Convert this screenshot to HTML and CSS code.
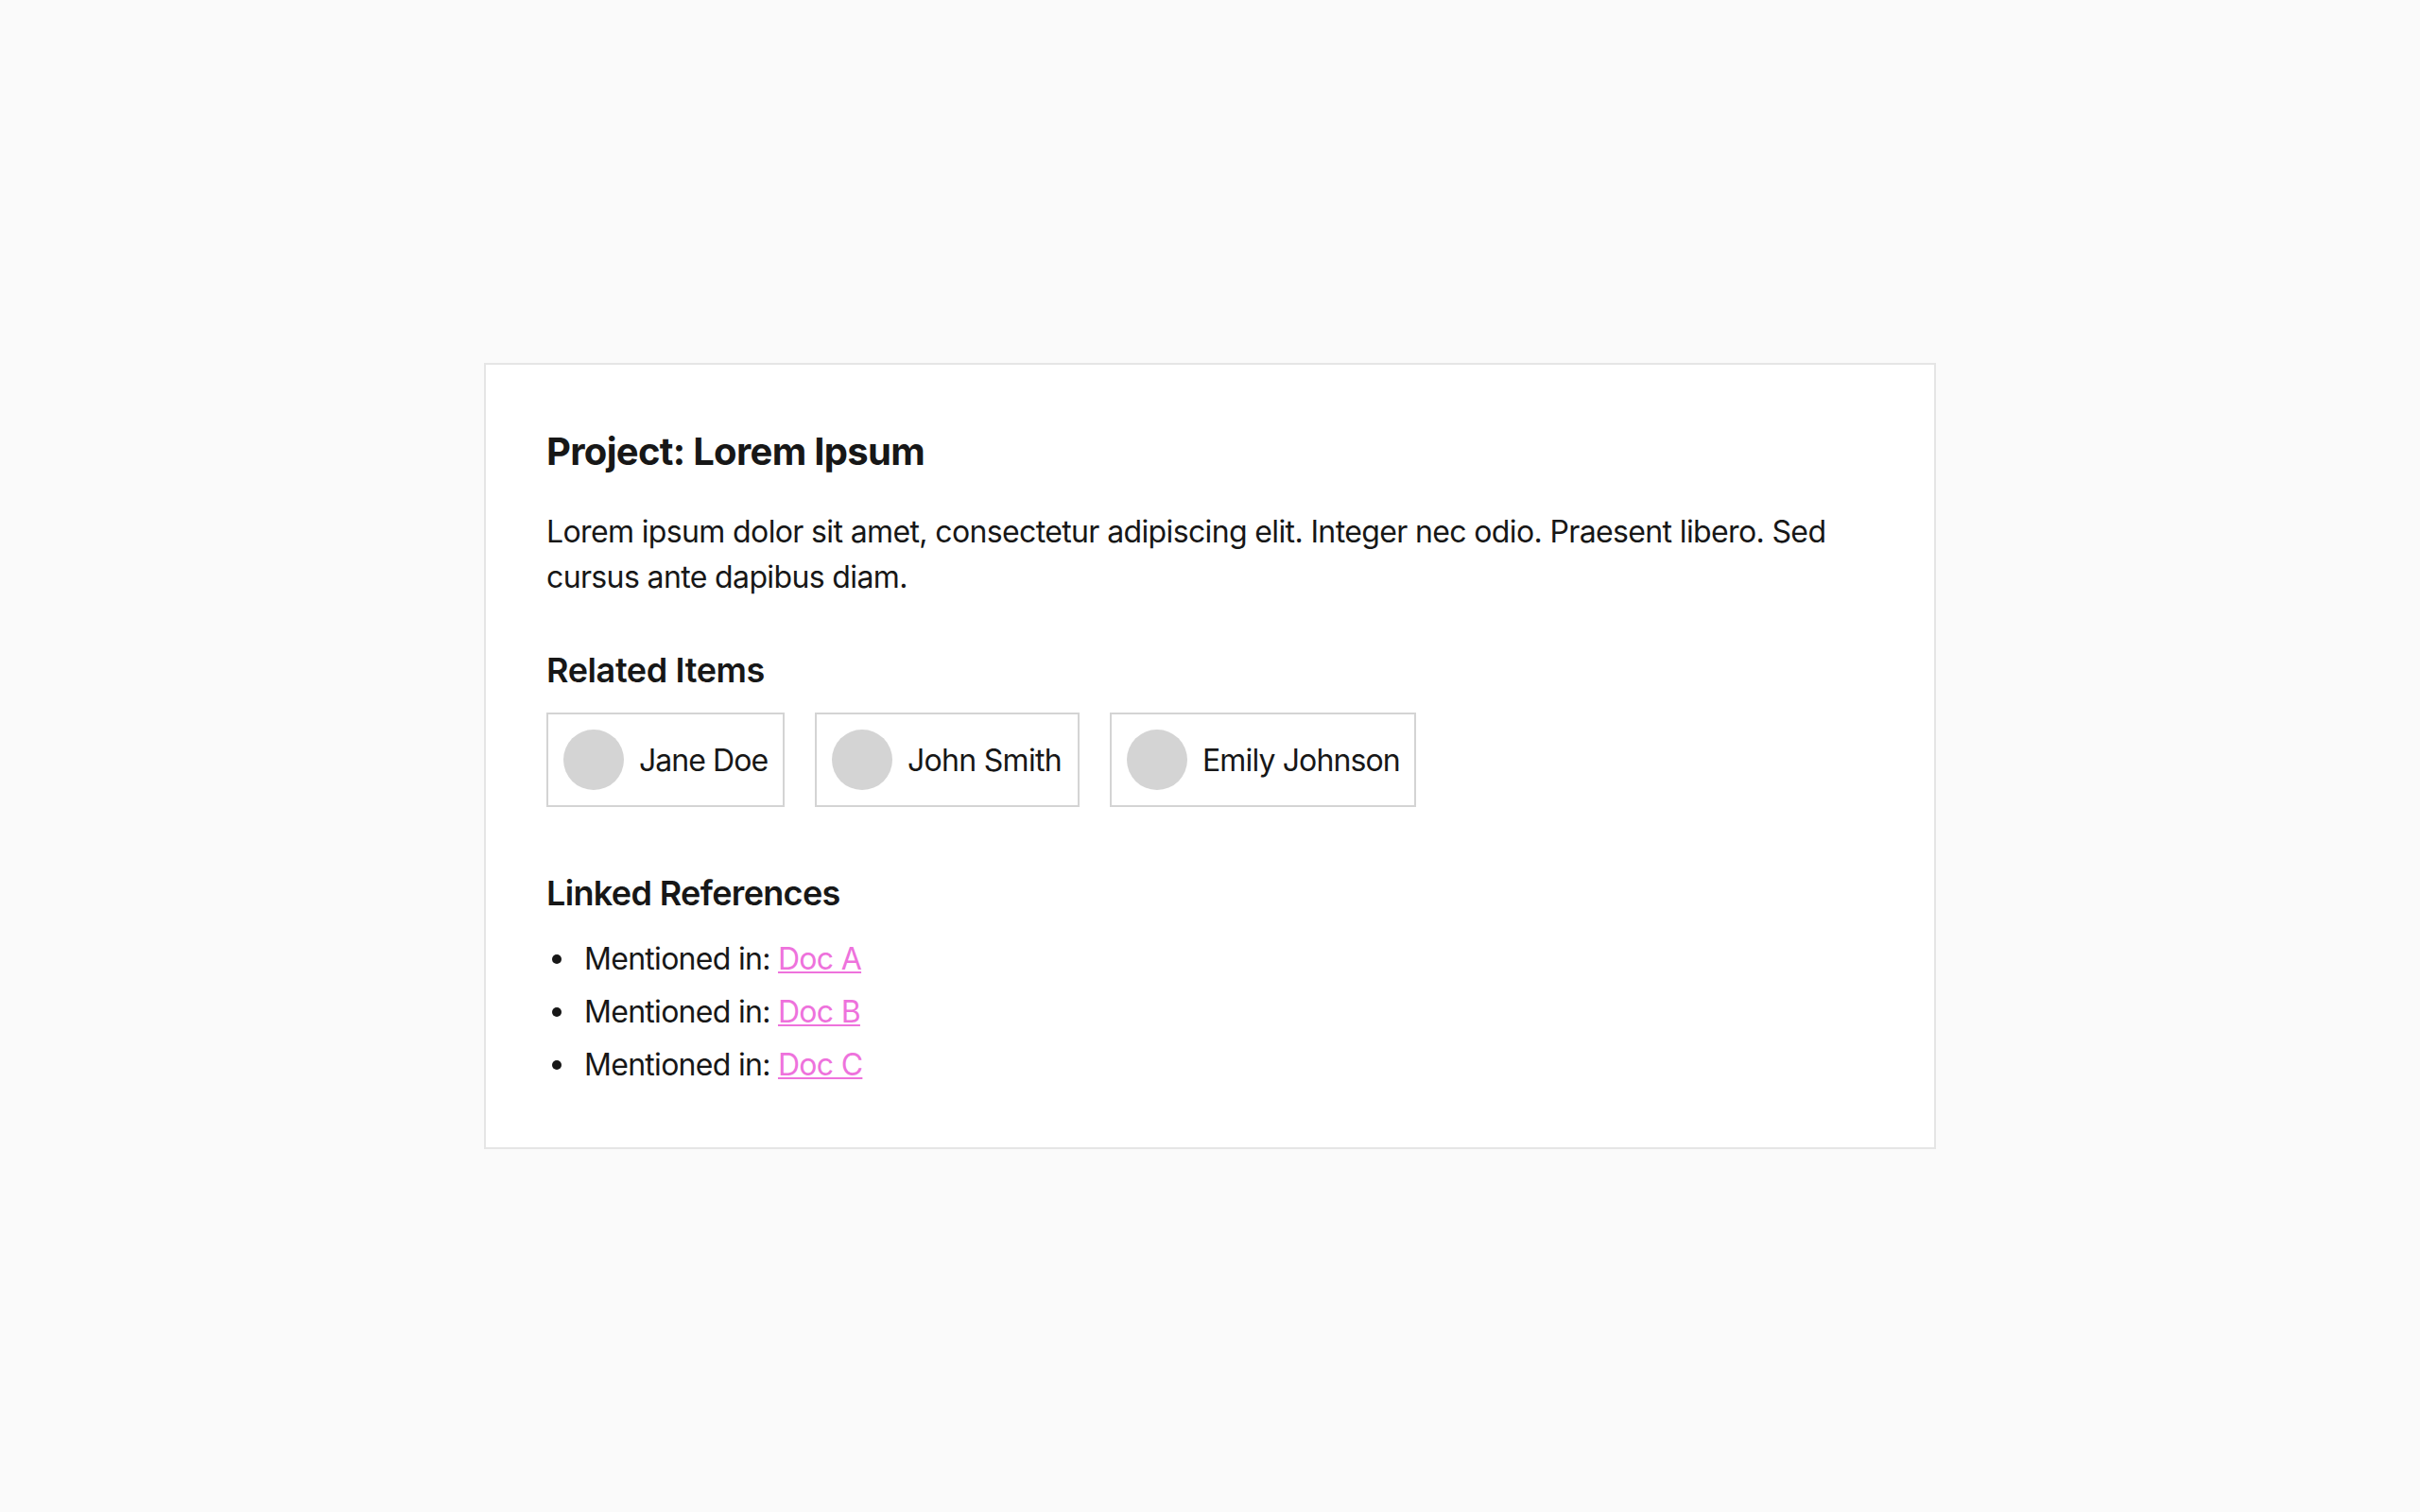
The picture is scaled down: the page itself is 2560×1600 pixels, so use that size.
FILE: index.html
```html
<!DOCTYPE html>
<html lang="en">
<head>
    <meta charset="UTF-8">
    <meta name="viewport" content="width=device-width, initial-scale=1.0">
    <title>Project: Lorem Ipsum</title>
    <link rel="stylesheet" href="styles.css">
</head>
<body>
    <main class="card">
        <h1 class="title">Project: Lorem Ipsum</h1>
        <p class="description">Lorem ipsum dolor sit amet, consectetur adipiscing elit. Integer nec odio. Praesent libero. Sed cursus ante dapibus diam.</p>

        <h2 class="section-title related-title">Related Items</h2>
        <div class="related-items">
            <div class="related-item item-jane">
                <span class="avatar"></span>
                <span class="name">Jane Doe</span>
            </div>
            <div class="related-item item-john">
                <span class="avatar"></span>
                <span class="name">John Smith</span>
            </div>
            <div class="related-item item-emily">
                <span class="avatar"></span>
                <span class="name">Emily Johnson</span>
            </div>
        </div>

        <h2 class="section-title references-title">Linked References</h2>
        <ul class="references">
            <li>Mentioned in: <a href="#">Doc A</a></li>
            <li>Mentioned in: <a href="#">Doc B</a></li>
            <li>Mentioned in: <a href="#">Doc C</a></li>
        </ul>
    </main>
</body>
</html>
```

FILE: styles.css
```css
:root {
    --background: #fafafa;
    --text-primary: #171717;
    --border-light: #e5e5e5;
    --border-item: #d4d4d4;
    --link: #ee72dc;
}

* {
    box-sizing: border-box;
}

body {
    background-color: var(--background);
    color: var(--text-primary);
    font-family: Inter, sans-serif;
    font-size: 32px;
    line-height: 48px;
    margin: 0;
    min-height: 100vh;
    display: flex;
    align-items: center;
    justify-content: center;
}

.card {
    width: 1536px;
    padding: 64px 64px 63px;
    border: 2px solid var(--border-light);
    background-color: #ffffff;
}

.title {
    font-size: 40px;
    font-weight: 700;
    line-height: 56px;
    letter-spacing: -0.7px;
    margin: 0 0 33px;
}

.description {
    width: 1392px;
    letter-spacing: -0.63px;
    margin: 0 0 46px;
}

.section-title {
    font-size: 36px;
    font-weight: 600;
    line-height: 56px;
    margin: 0 0 17px;
}

.related-title {
    letter-spacing: -0.38px;
}

.references-title {
    letter-spacing: -0.66px;
    margin-bottom: 18px;
}

.related-items {
    display: flex;
    gap: 32px;
    margin-bottom: 63px;
}

.related-item {
    display: flex;
    align-items: center;
    gap: 16px;
    padding: 16px;
    border: 2px solid var(--border-item);
    white-space: nowrap;
}

.item-jane {
    width: 252px;
    letter-spacing: -0.95px;
}

.item-john {
    width: 280px;
    letter-spacing: -0.7px;
}

.item-emily {
    width: 324px;
    letter-spacing: -0.87px;
}

.avatar {
    flex-shrink: 0;
    width: 64px;
    height: 64px;
    border-radius: 50%;
    background-color: var(--border-item);
}

.name {
    padding-top: 2px;
}

.references {
    list-style: none;
    margin: 0;
    padding: 0;
    letter-spacing: -0.71px;
}

.references li {
    padding-left: 40px;
}

.references li + li {
    margin-top: 8px;
}

.references li::before {
    content: "";
    display: inline-block;
    width: 10px;
    height: 10px;
    margin: 0 24px 0 -34px;
    border-radius: 50%;
    background-color: var(--text-primary);
    vertical-align: 6px;
}

.references a {
    color: var(--link);
    text-decoration-thickness: 2px;
    text-underline-offset: 2px;
}
```
